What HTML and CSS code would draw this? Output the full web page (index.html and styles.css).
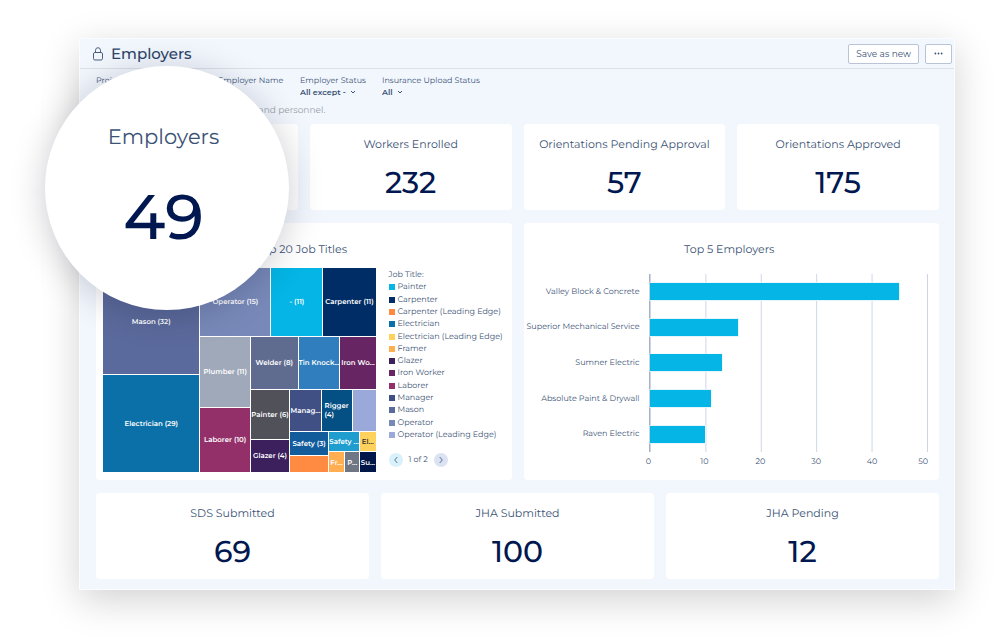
FILE: index.html
```html
<!DOCTYPE html>
<html lang="en">
  <head>
    <meta charset="utf-8">
    <title>Employers</title>
    <link rel="stylesheet" href="styles.css">
  </head>
  <body>
    <main class="panel">
      <header class="header">
        <svg class="lock" viewBox="0 0 12 16" width="12" height="16">
          <rect x="1.5" y="6.5" width="9" height="7.5" rx="1.4" />
          <path d="M3.5 6.5V4.4a2.5 2.7 0 0 1 5 0v2.1" />
        </svg>
        <h1>Employers</h1>
        <button class="button">Save as new</button>
        <button class="button more" aria-label="More">
          <svg viewBox="0 0 9 3" width="9" height="3">
            <circle cx="1.4" cy="1.5" r="0.9" />
            <circle cx="4.5" cy="1.5" r="0.9" />
            <circle cx="7.6" cy="1.5" r="0.9" />
          </svg>
        </button>
      </header>

      <div class="content">
        <div class="filters">
          <div class="filter">
            <label for="project">Project</label>
            <div class="pick">
              <select id="project"><option>All</option></select>
            </div>
          </div>
          <div class="filter">
            <label for="name">Employer Name</label>
            <div class="pick">
              <select id="name"><option>All</option></select>
            </div>
          </div>
          <div class="filter">
            <label for="status">Employer Status</label>
            <div class="pick">
              <select id="status"><option>All except -</option></select>
              <svg viewBox="0 0 6 4" width="6" height="4"><path d="M1 1l2 2 2-2" /></svg>
            </div>
          </div>
          <div class="filter">
            <label for="insurance">Insurance Upload Status</label>
            <div class="pick">
              <select id="insurance"><option>All</option></select>
              <svg viewBox="0 0 6 4" width="6" height="4"><path d="M1 1l2 2 2-2" /></svg>
            </div>
          </div>
        </div>
        <p class="description">Overview of the employers, workers and personnel.</p>

        <section class="row four">
          <div class="card magnified">
            <div class="bubble">
              <h2>Employers</h2>
              <p>49</p>
            </div>
          </div>
          <div class="card stat"><h2>Workers Enrolled</h2><p class="number">232</p></div>
          <div class="card stat"><h2>Orientations Pending Approval</h2><p class="number">57</p></div>
          <div class="card stat"><h2>Orientations Approved</h2><p class="number">175</p></div>
        </section>

        <section class="row two">
          <div class="card chart">
            <h2>Top 20 Job Titles</h2>
            <div class="jobs">
              <div class="treemap">
                <div class="col" style="flex-grow: 97">
                  <div class="tile mason" style="flex-grow: 107"><span>Mason (32)</span></div>
                  <div class="tile electrician" style="flex-grow: 97"><span>Electrician (29)</span></div>
                </div>
                <div class="col" style="flex-grow: 176">
                  <div class="line" style="flex-grow: 68">
                    <div class="tile operator" style="flex-grow: 71"><span>Operator (15)</span></div>
                    <div class="tile painter" style="flex-grow: 52"><span>- (11)</span></div>
                    <div class="tile carpenter" style="flex-grow: 53"><span>Carpenter (11)</span></div>
                  </div>
                  <div class="line" style="flex-grow: 136">
                    <div class="col" style="flex-grow: 50">
                      <div class="tile plumber" style="flex-grow: 71"><span>Plumber (11)</span></div>
                      <div class="tile laborer" style="flex-grow: 65"><span>Laborer (10)</span></div>
                    </div>
                    <div class="col" style="flex-grow: 126">
                      <div class="line" style="flex-grow: 53">
                        <div class="tile welder" style="flex-grow: 48"><span>Welder (8)</span></div>
                        <div class="tile knocker" style="flex-grow: 42"><span>Tin Knock...</span></div>
                        <div class="tile iron" style="flex-grow: 36"><span>Iron Wo...</span></div>
                      </div>
                      <div class="line" style="flex-grow: 83">
                        <div class="col" style="flex-grow: 39">
                          <div class="tile paint" style="flex-grow: 50"><span>Painter (6)</span></div>
                          <div class="tile glazer" style="flex-grow: 33"><span>Glazer (4)</span></div>
                        </div>
                        <div class="col" style="flex-grow: 87">
                          <div class="line" style="flex-grow: 41">
                            <div class="tile manager" style="flex-grow: 32"><span>Manag...</span></div>
                            <div class="tile rigger" style="flex-grow: 31"><span>Rigger<br>(4)</span></div>
                            <div class="tile operator-edge" style="flex-grow: 24"></div>
                          </div>
                          <div class="line" style="flex-grow: 41">
                            <div class="col" style="flex-grow: 39">
                              <div class="tile safety" style="flex-grow: 24"><span>Safety (3)</span></div>
                              <div class="tile carpenter-edge" style="flex-grow: 16"></div>
                            </div>
                            <div class="col" style="flex-grow: 48">
                              <div class="line" style="flex-grow: 20">
                                <div class="tile safety-manager" style="flex-grow: 31"><span>Safety ...</span></div>
                                <div class="tile electrician-edge" style="flex-grow: 16"><span>El...</span></div>
                              </div>
                              <div class="line" style="flex-grow: 20">
                                <div class="tile framer" style="flex-grow: 16"><span>Fr...</span></div>
                                <div class="tile project" style="flex-grow: 15"><span>P...</span></div>
                                <div class="tile super" style="flex-grow: 16"><span>Su...</span></div>
                              </div>
                            </div>
                          </div>
                        </div>
                      </div>
                    </div>
                  </div>
                </div>
              </div>

              <div class="legend">
                <ul>
                  <li>Job Title:</li>
                  <li><i class="painter"></i>Painter</li>
                  <li><i class="carpenter"></i>Carpenter</li>
                  <li><i class="carpenter-edge"></i>Carpenter (Leading Edge)</li>
                  <li><i class="electrician"></i>Electrician</li>
                  <li><i class="electrician-edge"></i>Electrician (Leading Edge)</li>
                  <li><i class="framer"></i>Framer</li>
                  <li><i class="glazer"></i>Glazer</li>
                  <li><i class="iron"></i>Iron Worker</li>
                  <li><i class="laborer"></i>Laborer</li>
                  <li><i class="manager"></i>Manager</li>
                  <li><i class="mason"></i>Mason</li>
                  <li><i class="operator"></i>Operator</li>
                  <li><i class="operator-edge"></i>Operator (Leading Edge)</li>
                </ul>
                <div class="pager">
                  <button class="prev" aria-label="Previous page">
                    <svg viewBox="0 0 4 8" width="4" height="8"><path d="M3.3 1L.7 4l2.6 3" /></svg>
                  </button>
                  <span>1 of 2</span>
                  <button class="next" aria-label="Next page">
                    <svg viewBox="0 0 4 8" width="4" height="8"><path d="M.7 1l2.6 3L.7 7" /></svg>
                  </button>
                </div>
              </div>
            </div>
          </div>

          <div class="card chart">
            <h2>Top 5 Employers</h2>
            <div class="bars">
              <div class="names">
                <span>Valley Block &amp; Concrete</span>
                <span>Superior Mechanical Service</span>
                <span>Sumner Electric</span>
                <span>Absolute Paint &amp; Drywall</span>
                <span>Raven Electric</span>
              </div>
              <div class="plot">
                <div class="bar" style="width: 90%"></div>
                <div class="bar" style="width: 32%"></div>
                <div class="bar" style="width: 26%"></div>
                <div class="bar" style="width: 22%"></div>
                <div class="bar" style="width: 20%"></div>
              </div>
              <div class="ticks">
                <span>0</span>
                <span>10</span>
                <span>20</span>
                <span>30</span>
                <span>40</span>
                <span>50</span>
              </div>
            </div>
          </div>
        </section>

        <section class="row three">
          <div class="card stat"><h2>SDS Submitted</h2><p class="number">69</p></div>
          <div class="card stat"><h2>JHA Submitted</h2><p class="number">100</p></div>
          <div class="card stat"><h2>JHA Pending</h2><p class="number">12</p></div>
        </section>
      </div>
    </main>
  </body>
</html>
```

FILE: styles.css
```css
* {
  box-sizing: border-box;
}
body {
  margin: 0;
  padding: 38px 45px 49px 79px;
  background: #fff;
  color: #3b5275;
  font-family: Montserrat, Inter, sans-serif;
  font-size: 8px;
  text-rendering: geometricPrecision;
}
h1, h2, p, ul {
  margin: 0;
  padding: 0;
}
h1, h2 {
  font-weight: 400;
}
button, select {
  font: inherit;
  color: inherit;
  padding: 0;
}
svg {
  fill: none;
  stroke: #3b5275;
  stroke-width: 1;
}
.panel {
  background: #f2f7fe;
  border: 1px solid #fafcff;
  box-shadow: 0 10px 36px rgba(0, 0, 0, 0.18);
}
.header {
  display: flex;
  align-items: center;
  gap: 6px;
  height: 30px;
  padding: 0 2px 0 12px;
  border-bottom: 1px solid #dce1e8;
}
.header h1 {
  flex: 1;
  padding-left: 1px;
  font-size: 15px;
  font-weight: 500;
  line-height: 20px;
  color: #2c4468;
}
.lock {
  stroke: #4a5f80;
}
.button {
  height: 20px;
  padding: 0 7px;
  font-size: 9px;
  background: #fff;
  border: 1px solid #b9c4d6;
  border-radius: 2px;
}
.more {
  width: 27px;
}
.more svg {
  display: block;
  margin: 0 auto;
  fill: #3b5275;
  stroke: none;
}

.content {
  padding: 8px 15px 10px 16px;
}
.filters {
  display: grid;
  grid-template-columns: 122px 82px 82px auto;
  line-height: 9px;
}
.filter label {
  display: block;
}
.pick {
  display: flex;
  align-items: center;
  gap: 4px;
}
.pick select {
  appearance: none;
  field-sizing: content;
  height: 12px;
  border: none;
  background: none;
  font-weight: 600;
  line-height: 12px;
}
.description {
  margin: 7px 0;
  font-size: 9px;
  line-height: 12px;
  color: #9ba1ab;
}

.row {
  display: grid;
  gap: 12px;
}
.four {
  grid-template-columns: repeat(4, 1fr);
}
.two {
  grid-template-columns: repeat(2, 1fr);
  margin: 13px 0;
}
.three {
  grid-template-columns: repeat(3, 1fr);
}
.card {
  min-width: 0;
  background: #fff;
  border-radius: 4px;
}
.card h2 {
  font-size: 11px;
  line-height: 16px;
  text-align: center;
}
.stat {
  padding: 12px 4px 9px;
}
.number {
  margin-top: 13px;
  font-size: 30px;
  font-weight: 500;
  line-height: 36px;
  text-align: center;
  color: #00174f;
}
.chart {
  padding: 18px 11px 8px 7px;
}

.jobs {
  display: flex;
  gap: 13px;
  margin-top: 11px;
}
.treemap {
  flex: 1;
  display: flex;
  gap: 1px;
  height: 204px;
  min-width: 0;
  font-size: 7px;
  font-weight: 600;
  line-height: 9px;
  color: #fff;
}
.treemap .line, .treemap .col {
  display: flex;
  flex: 1 1 0;
  gap: 1px;
  min-width: 0;
  min-height: 0;
}
.treemap .col {
  flex-direction: column;
}
.tile {
  display: flex;
  flex: 1 1 0;
  align-items: center;
  justify-content: center;
  min-width: 0;
  min-height: 0;
  overflow: hidden;
  white-space: nowrap;
}
.painter { background: #04b5e5; }
.carpenter { background: #002d65; }
.carpenter-edge { background: #ff8b42; }
.electrician { background: #0b70a7; }
.electrician-edge { background: #ffd25e; }
.framer { background: #ffae52; }
.glazer { background: #3b205d; }
.iron { background: #682564; }
.laborer { background: #93306a; }
.manager { background: #405085; }
.mason { background: #5b6a9c; }
.operator { background: #7889b9; }
.operator-edge { background: #9aa9d9; }
.plumber { background: #a0a9ba; }
.welder { background: #606c8f; }
.knocker { background: #307ebd; }
.paint { background: #505159; }
.rigger { background: #044f83; }
.safety { background: #125c9c; }
.safety-manager { background: #1e9dce; }
.project { background: #707784; }
.super { background: #001849; }
.tile.electrician-edge {
  color: #333;
}

.legend {
  display: flex;
  flex-direction: column;
  gap: 12px;
  width: 112px;
  padding: 1px 0 5px;
}
.legend ul {
  flex: 1;
  display: grid;
  grid-auto-rows: 1fr;
  list-style: none;
}
.legend li {
  display: flex;
  align-items: center;
  gap: 3px;
  line-height: 10px;
  white-space: nowrap;
}
.legend i {
  width: 6px;
  height: 6px;
}
.pager {
  display: flex;
  align-items: center;
  gap: 6px;
}
.pager button {
  display: flex;
  align-items: center;
  justify-content: center;
  width: 14px;
  height: 14px;
  border: none;
  border-radius: 50%;
}
.pager .prev {
  background: #d9f1fa;
}
.pager .next {
  background: #dbe2f1;
}
.pager path {
  stroke-width: 0.8;
}

.bars {
  display: grid;
  grid-template-columns: 118px 1fr;
  grid-template-rows: 178px auto;
  margin-top: 17px;
}
.names, .plot {
  display: grid;
  grid-template-columns: 100%;
  grid-auto-rows: 1fr;
  align-items: center;
}
.names {
  justify-items: end;
  padding-right: 9px;
  white-space: nowrap;
}
.plot {
  background: linear-gradient(to right, #cfd6e3 1px, transparent 1px) 0 0 / 20% 100%;
  border-left: 1px solid #a9b2c2;
  border-right: 1px solid #cfd6e3;
}
.bar {
  height: 17px;
  background: #04b5e5;
  box-shadow: 0 0 0 1px #e3f6fc;
  clip-path: inset(-1px -1px -1px 0);
}
.ticks {
  grid-column: 2;
  display: flex;
  justify-content: space-between;
  padding-top: 5px;
  line-height: 10px;
}
.ticks span {
  display: flex;
  justify-content: center;
  width: 0;
}
.ticks span:last-child {
  justify-content: flex-end;
}

/* enlarged stat that sits over its own card */
.magnified {
  position: relative;
}
.bubble {
  position: absolute;
  top: -58px;
  left: -51px;
  width: 244px;
  height: 244px;
  padding: 58px 7px 0 0;
  border-radius: 50%;
  background: #fff;
  box-shadow: 0 4px 36px rgba(0, 0, 30, 0.2);
  text-align: center;
}
.bubble h2 {
  font-size: 21px;
  line-height: 28px;
}
.bubble p {
  margin-top: 29px;
  font-size: 63px;
  font-weight: 500;
  line-height: 72px;
  color: #00174f;
}
```
